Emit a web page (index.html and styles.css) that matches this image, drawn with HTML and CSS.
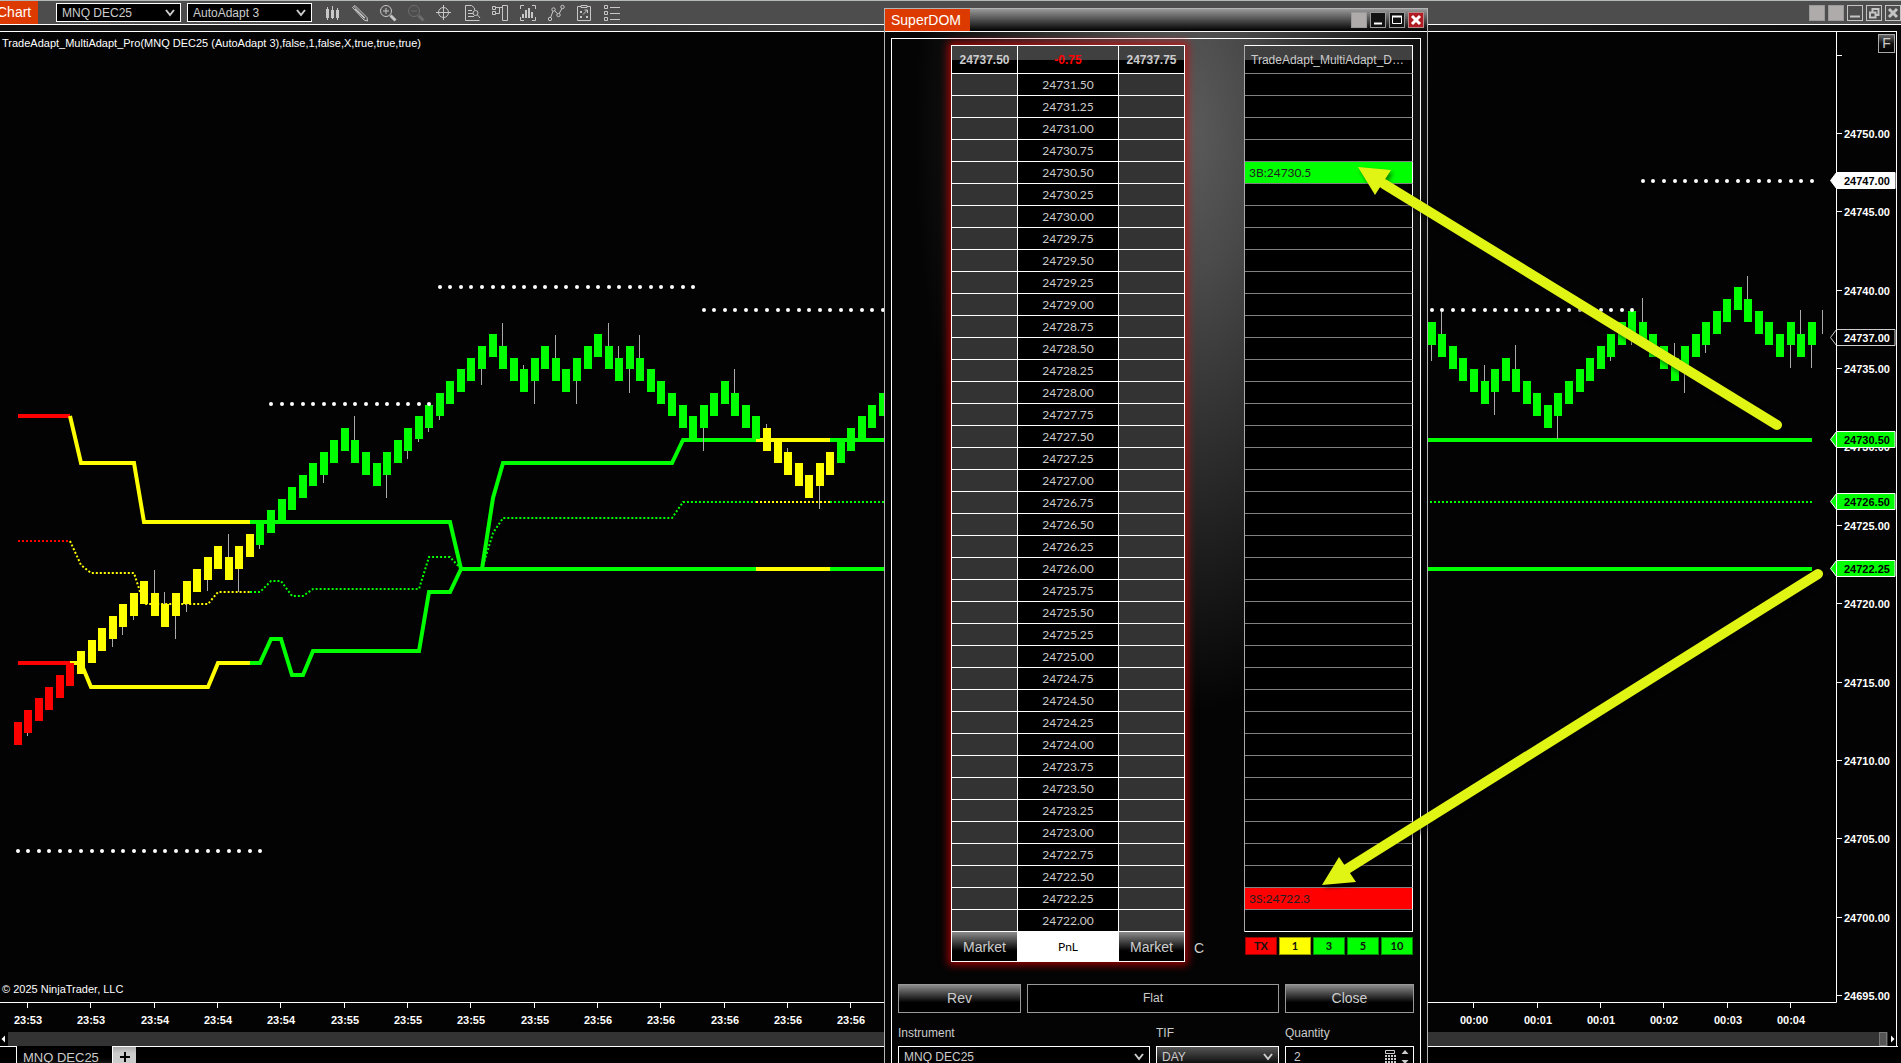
FILE: index.html
```html
<!DOCTYPE html>
<html lang="en">
<head>
<meta charset="utf-8">
<title>Chart - MNQ DEC25</title>
<link rel="stylesheet" href="styles.css">
</head>
<body>
<header class="toolbar">
  <h1 class="toolbar-title">Chart</h1>
  <span class="select toolbar-select">
    <select aria-label="Instrument"><option>MNQ DEC25</option></select>
    <svg class="chevron" viewBox="0 0 10 8"><path d="M1 1l4 5 4-5"/></svg>
  </span>
  <span class="select toolbar-select">
    <select aria-label="Bar type"><option>AutoAdapt 3</option></select>
    <svg class="chevron" viewBox="0 0 10 8"><path d="M1 1l4 5 4-5"/></svg>
  </span>
  <nav class="tools" aria-label="Chart tools">
    <button type="button" aria-label="Chart style"><svg viewBox="0 0 20 20"><path class="solid" d="M4 6h3v9H4zM9 7h3v8H9zM14 7h3v8h-3z"/><path d="M5.500 4v13M10.500 3v13M15.500 5v12"/></svg></button>
    <button type="button" aria-label="Drawing tools"><svg viewBox="0 0 20 20"><path d="M2.500 4.500l2.500-2 12 12 .500 3.500-3.500-1zM5 6l9.500 9.500M4 3.500L15 15"/></svg></button>
    <button type="button" aria-label="Zoom in"><svg viewBox="0 0 20 20"><circle cx="8" cy="8" r="5.500"/><path d="M8 5v6M5 8h6"/><path class="thick" d="M12.500 12.500l5 5"/></svg></button>
    <button type="button" class="dim" aria-label="Zoom out" disabled><svg viewBox="0 0 20 20"><circle cx="8" cy="8" r="5.500"/><path d="M5 8h6"/><path class="thick" d="M12.500 12.500l5 5"/></svg></button>
    <button type="button" aria-label="Crosshair"><svg viewBox="0 0 20 20"><circle cx="9.500" cy="9.500" r="5"/><path d="M9.500 2v15M2 9.500h15"/></svg></button>
    <button type="button" aria-label="Data box"><svg viewBox="0 0 20 20"><path d="M12.500 7V5l-3-2.500h-6v15h14M6 7.500h4M6 10.500h5M6 13.500h6"/><circle cx="13.500" cy="10" r="2.500"/><path d="M15.500 12l2.500 3"/></svg></button>
    <button type="button" aria-label="Chart trader"><svg viewBox="0 0 20 20"><path d="M2.500 3.500h3v3h-3zM2.500 8.500h3v3h-3zM12.500 2.500h5v15h-5zM6 4.500h6M6 10.500h3.500v-6"/></svg></button>
    <button type="button" aria-label="Data series"><svg viewBox="0 0 20 20"><path d="M6 2.500H2.500V6M14 2.500h3.500V6M2.500 14v3.500H6M17.500 14v3.500H14"/><path class="bars" d="M5 11v4M8 7v8M11 5v10M14 9v6"/></svg></button>
    <button type="button" aria-label="Indicators"><svg viewBox="0 0 20 20"><circle cx="4" cy="16" r="1.700"/><circle cx="7.500" cy="6.500" r="1.700"/><circle cx="12.500" cy="12" r="1.700"/><circle cx="16.500" cy="4" r="1.700"/><path d="M4.600 14.500l2.400-6.300M8.600 7.700l2.800 3M13.200 10.500l2.700-5"/></svg></button>
    <button type="button" aria-label="Strategies"><svg viewBox="0 0 20 20"><path d="M7 3.500H3.500v14h13v-14H13M7 2.500h6v2H7zM6 8l2 2M8 8l-2 2M6 13l2 2M8 13l-2 2M12 13l2 2M14 13l-2 2M9 11.500L13.500 7M10.500 7h3v3"/></svg></button>
    <button type="button" aria-label="Properties"><svg viewBox="0 0 20 20"><path d="M2.500 2.500h3v3h-3zM2.500 8.500h3v3h-3zM2.500 14.500h3v3h-3zM8 4.500h10M8 10.500h10M8 16.500h10"/></svg></button>
  </nav>
  <div class="window-controls">
    <button type="button" class="win-btn blank" aria-label="Link instrument"></button>
    <button type="button" class="win-btn blank" aria-label="Link interval"></button>
    <button type="button" class="win-btn outline" aria-label="Minimize"><svg viewBox="0 0 14 14"><path class="bar" d="M2 10.500h10"/></svg></button>
    <button type="button" class="win-btn outline" aria-label="Restore"><svg viewBox="0 0 14 14"><path class="bar" d="M5.500 6V3h6v6h-3M3 6.500h5.500v5H3z"/></svg></button>
    <button type="button" class="win-btn outline" aria-label="Close"><svg viewBox="0 0 14 14"><path class="cross" d="M3 3l8 8M11 3l-8 8"/></svg></button>
  </div>
</header>

<main class="chart-frame">
  <svg class="chart" id="chart" role="img" aria-label="MNQ DEC25 price chart"></svg>
  <button type="button" class="fixed-scale">F</button>
  <div class="scrollbar">
    <button type="button" class="scroll-btn" aria-label="Scroll left"><svg viewBox="0 0 8 14"><path d="M5 3.500v7L1.500 7z"/></svg></button>
    <span class="scroll-thumb"></span>
    <button type="button" class="scroll-btn" aria-label="Scroll right"><svg viewBox="0 0 8 14"><path d="M3 3.500v7L6.500 7z"/></svg></button>
  </div>
</main>

<footer class="tabs">
  <span class="tabs-lead"></span>
  <button type="button" class="tab">MNQ DEC25</button>
  <button type="button" class="tab-add" aria-label="Add tab"><svg viewBox="0 0 12 12"><path d="M6 1v10M1 6h10"/></svg></button>
  <span class="tabs-rest"></span>
</footer>

<section class="dom" aria-label="SuperDOM">
  <header class="dom-header">
    <h2 class="dom-title">SuperDOM</h2>
    <div class="window-controls">
      <button type="button" class="win-btn blank" aria-label="Link"></button>
      <button type="button" class="win-btn dark" aria-label="Minimize"><svg viewBox="0 0 14 14"><path class="bar" d="M3 10.500h8"/></svg></button>
      <button type="button" class="win-btn dark" aria-label="Maximize"><svg viewBox="0 0 14 14"><path d="M2.500 3.500h9v7h-9z"/><path class="bar" d="M2 3.500h10"/></svg></button>
      <button type="button" class="win-btn close" aria-label="Close"><svg viewBox="0 0 14 14"><path class="cross" d="M3 3l8 8M11 3l-8 8"/></svg></button>
    </div>
  </header>
  <div class="dom-body">
    <div class="dom-panel">
      <div class="dom-grid">
        <table class="ladder">
          <colgroup><col class="side"><col><col class="side"></colgroup>
          <thead><tr><th>24737.50</th><th class="change">-0.75</th><th>24737.75</th></tr></thead>
          <tbody id="ladder"></tbody>
          <tfoot><tr><td><button type="button" class="market">Market</button></td><td class="pnl">PnL</td><td><button type="button" class="market">Market</button></td></tr></tfoot>
        </table>
        <button type="button" class="center-btn">C</button>
        <div class="signals-col">
          <table class="signals">
            <thead><tr><th>TradeAdapt_MultiAdapt_DOM</th></tr></thead>
            <tbody id="signals"></tbody>
          </table>
          <div class="chips">
            <button type="button" class="chip red">TX</button>
            <button type="button" class="chip yellow">1</button>
            <button type="button" class="chip">3</button>
            <button type="button" class="chip">5</button>
            <button type="button" class="chip">10</button>
          </div>
        </div>
      </div>
      <div class="actions">
        <button type="button" class="action">Rev</button>
        <output class="position">Flat</output>
        <button type="button" class="action">Close</button>
      </div>
      <div class="fields">
        <label for="instrument">Instrument</label>
        <label for="tif">TIF</label>
        <label for="quantity">Quantity</label>
        <span class="select field">
          <select id="instrument"><option>MNQ DEC25</option></select>
          <svg class="chevron" viewBox="0 0 10 8"><path d="M1 1l4 5 4-5"/></svg>
        </span>
        <span class="select field shaded">
          <select id="tif"><option>DAY</option></select>
          <svg class="chevron" viewBox="0 0 10 8"><path d="M1 1l4 5 4-5"/></svg>
        </span>
        <span class="field quantity">
          <input id="quantity" type="text" inputmode="numeric" value="2">
          <svg class="calc" viewBox="0 0 12 16"><path class="frame" d="M1.500 1.500h9v3h-9z"/><path d="M1 6h2v2H1zM4 6h2v2H4zM7 6h2v2H7zM10 6h2v2h-2zM1 9h2v2H1zM4 9h2v2H4zM7 9h2v2H7zM10 9h2v2h-2zM1 12h2v2H1zM4 12h2v2H4zM7 12h2v2H7zM10 12h2v2h-2z"/></svg>
          <svg class="spin" viewBox="0 0 8 16"><path d="M4 1l3.500 4h-7zM4 15L.500 11h7z"/></svg>
        </span>
      </div>
    </div>
  </div>
</section>

<svg class="annotations" aria-hidden="true">
  <path class="shaft" d="M1777 425L1384 184"/>
  <path class="head" d="M1358 167L1391 170L1375 195Z"/>
  <path class="shaft" d="M1818 574L1347 869"/>
  <path class="head" d="M1322 885L1339 857L1356 882Z"/>
</svg>
<script src="chart.js"></script>
</body>
</html>
```
FILE: styles.css
```css
* {
  box-sizing: border-box;
}

body {
  margin: 0;
  height: 100vh;
  display: flex;
  flex-direction: column;
  position: relative;
  overflow: hidden;
  background: #000;
  color: #ccc;
  font: 12px/16px "Liberation Sans", Arial, sans-serif;
}

button,
select,
input {
  margin: 0;
  padding: 0;
  border: 0;
  border-radius: 0;
  background: none;
  color: inherit;
  font: inherit;
  appearance: none;
}

h1,
h2 {
  margin: 0;
  background: #dc3a00;
  color: #fff;
  font-size: 14px;
  font-weight: 400;
  line-height: 22px;
}

/* Chart window toolbar */
.toolbar {
  flex: none;
  display: flex;
  align-items: center;
  height: 25px;
  border-top: 1px solid #b4b8b8;
  border-bottom: 1px solid #fff;
  background: #4d4d4d;
}

.toolbar-title {
  width: 38px;
  margin-right: 18px;
  line-height: 23px;
  text-indent: -3px;
  white-space: nowrap;
}

.select {
  position: relative;
  display: block;
  border: 1px solid #fff;
  background: #000;
}

.select select {
  display: block;
  width: 100%;
  height: 100%;
  padding: 0 24px 0 5px;
}

.chevron {
  position: absolute;
  top: 50%;
  right: 5px;
  width: 10px;
  height: 8px;
  margin-top: -4px;
  fill: none;
  stroke: #ccc;
  stroke-width: 2;
  pointer-events: none;
}

.toolbar-select {
  width: 125px;
  height: 19px;
  margin-right: 6px;
}

.tools {
  display: flex;
  gap: 8px;
  margin-left: 4px;
}

.tools button,
.tools svg {
  display: block;
  width: 20px;
  height: 20px;
}

.tools svg {
  fill: none;
  stroke: #c8c8c8;
}

.tools .solid {
  fill: #c8c8c8;
  stroke: none;
}

.tools .thick {
  stroke-width: 3;
}

.tools .bars {
  stroke-width: 2;
}

.tools .dim {
  opacity: 0.25;
}

.window-controls {
  display: flex;
  gap: 3px;
  margin-left: auto;
}

.win-btn {
  width: 16px;
  height: 16px;
  border: 1px solid #999;
}

.win-btn svg {
  display: block;
  width: 14px;
  height: 14px;
  fill: none;
  stroke: #fff;
}

.win-btn .bar {
  stroke-width: 2;
}

.win-btn .cross {
  stroke-width: 3;
}

.win-btn.blank {
  background: #b0abab;
}

.win-btn.outline {
  border-color: #c4c4c4;
}

.win-btn.outline svg {
  stroke: #c4c4c4;
}

.win-btn.dark {
  background: #111;
}

.win-btn.close {
  border-color: #b88;
  background: #b01c24;
}

/* Chart */
.chart-frame {
  flex: 1;
  min-height: 0;
  display: flex;
  flex-direction: column;
  position: relative;
  padding: 7px 4px 0 0;
  background: linear-gradient(90deg, #101010, #404040 45%, #303030 60%, #080808);
}

.chart {
  flex: 1;
  min-height: 0;
  width: 100%;
  border-right: 1px solid #fff;
  background: #030303;
  box-shadow: 0 -1px #fff;
}

.chart text {
  fill: #fff;
  font-size: 11px;
  dominant-baseline: central;
}

.chart .tick-label,
.chart .flag-text {
  font-weight: 700;
}

.chart .middle {
  text-anchor: middle;
}

.chart .flag-text {
  fill: #000;
}

.chart .flag-text.light {
  fill: #fff;
}

.chart .axis {
  stroke: #fff;
  fill: none;
}

.chart .wick {
  stroke: #aaa;
}

.chart .band {
  fill: none;
  stroke-width: 4;
}

.chart .mid {
  fill: none;
  stroke-width: 2;
  stroke-dasharray: 2 2;
}

.chart .dot {
  fill: #fff;
}

.fixed-scale {
  position: absolute;
  top: 9px;
  right: 6px;
  width: 17px;
  height: 19px;
  border: 1px solid #aaa;
  background: linear-gradient(#666, #111 50%, #000);
  font-size: 14px;
  line-height: 17px;
}

.scrollbar {
  flex: none;
  display: flex;
  align-items: stretch;
  height: 14px;
  border-right: 1px solid #fff;
  background: #333;
}

.scroll-btn {
  width: 8px;
  background: #000;
}

.scroll-btn svg {
  display: block;
  width: 8px;
  height: 14px;
  fill: #fff;
}

.scroll-thumb {
  width: 8px;
  margin-left: auto;
  margin-right: 1px;
  border: 1px solid #777;
  background: #555;
}

/* Workspace tabs */
.tabs {
  flex: none;
  display: flex;
  height: 17px;
  overflow: hidden;
}

.tabs-lead {
  width: 16px;
  border-top: 1px solid #fff;
}

.tab {
  flex: none;
  width: 97px;
  height: 24px;
  padding-left: 6px;
  border: solid #fff;
  border-width: 0 1px;
  background: linear-gradient(#000 50%, #333);
  color: #ccc;
  font-size: 13px;
  line-height: 24px;
  text-align: left;
}

.tab-add {
  width: 23px;
  border-top: 1px solid #fff;
  background: linear-gradient(#aaa, #ccc 40%);
}

.tab-add svg {
  display: block;
  width: 12px;
  height: 12px;
  margin: 3px auto 0;
  stroke: #000;
  stroke-width: 2;
}

.tabs-rest {
  flex: 1;
  margin-right: 3px;
  border-top: 1px solid #fff;
}

/* SuperDOM window */
.dom {
  position: absolute;
  top: 8px;
  bottom: 0;
  left: 884px;
  width: 544px;
  display: flex;
  flex-direction: column;
  overflow: hidden;
  border: 1px solid #b4b4b4;
  border-bottom: 0;
  background: #030303;
}

.dom-header {
  flex: none;
  display: flex;
  align-items: center;
  height: 23px;
  padding-right: 3px;
  border-bottom: 1px solid #fff;
  background: linear-gradient(#999, #000);
}

.dom-title {
  width: 85px;
  padding-left: 6px;
}

.dom-body {
  flex: 1;
  padding: 6px 6px 0;
  background: radial-gradient(ellipse 270px 580px at 300px 100px, #5c5c5c, #4a4a4a 25%, #040404);
}

.dom-panel {
  height: 100%;
  padding: 6px 6px 0;
  border: 1px solid #fff;
  border-bottom: 0;
}

.dom-grid {
  display: flex;
  align-items: flex-end;
  padding-left: 53px;
}

.ladder,
.signals {
  table-layout: fixed;
  border-collapse: separate;
  border-spacing: 0;
  border: solid #fff;
  border-width: 1px 0 0 1px;
}

.ladder {
  flex: none;
  width: 234px;
  box-shadow: 0 0 8px 3px rgba(220, 0, 0, 0.7);
}

.ladder .side {
  width: 66px;
}

.ladder th,
.ladder td,
.signals th,
.signals td {
  height: 22px;
  padding: 0;
  border: solid #fff;
  border-width: 0 1px 1px 0;
  background: #000;
  overflow: hidden;
  text-align: center;
  white-space: nowrap;
}

.ladder thead th,
.signals thead th {
  height: 28px;
  background: linear-gradient(#404040 50%, #000 50%);
}

.ladder .change {
  color: #f00;
}

.ladder tbody td {
  font: 12px/20px Lato, "Open Sans", sans-serif;
}

.ladder tbody td:nth-child(odd) {
  background: #333;
}

.ladder tfoot td {
  height: 30px;
}

.ladder .pnl {
  background: #fff;
  color: #000;
  font: 12px/16px Lato, "Open Sans", sans-serif;
}

.market {
  display: block;
  width: 100%;
  height: 29px;
  background: linear-gradient(#8c8c8c, #000 65%);
  font-size: 14px;
}

.center-btn {
  margin-left: 9px;
  height: 29px;
  font-size: 14px;
}

.signals-col {
  width: 169px;
  margin-left: auto;
  margin-right: 1px;
}

.signals {
  width: 100%;
  border-left-color: #aaa;
}

.signals thead th {
  padding: 0 6px;
  font-weight: 400;
  text-overflow: ellipsis;
}

.signals th,
.signals td {
  border-bottom-color: #808080;
}

.signals tbody td {
  padding-left: 4px;
  color: #202020;
  font: 12px/20px Lato, "Open Sans", sans-serif;
  text-align: left;
}

.signals tbody tr:last-child td {
  border-bottom-color: #fff;
}

.signals .buy {
  background: #0f0;
}

.signals .sell {
  background: #f00;
}

.chips {
  display: flex;
  gap: 2px;
  margin: 5px 0 7px 1px;
}

.chip {
  flex: 1;
  height: 18px;
  border: 1px solid #088c08;
  background: #0f0;
  color: #111;
  font: bold 11px/16px Lato, "Open Sans", sans-serif;
}

.chip.red {
  border-color: #900;
  background: #f00;
}

.chip.yellow {
  border-color: #990;
  background: #ff0;
}

.actions {
  display: grid;
  grid-template-columns: minmax(0, 123fr) minmax(0, 252fr) minmax(0, 129fr);
  gap: 6px;
  margin-top: 22px;
}

.action,
.position {
  height: 29px;
  border: 1px solid #999;
  background: #000;
  line-height: 27px;
  text-align: center;
}

.action {
  background: linear-gradient(#8c8c8c, #000 65%);
  font-size: 14px;
}

.fields {
  display: grid;
  grid-template-columns: minmax(0, 252fr) minmax(0, 123fr) minmax(0, 129fr);
  gap: 5px 6px;
  margin-top: 12px;
}

.field {
  height: 22px;
  border: 1px solid #fff;
  background: #000;
}

.field.shaded {
  background: linear-gradient(#555, #000);
}

.quantity {
  display: flex;
  align-items: center;
  gap: 5px;
  padding: 0 4px 0 8px;
}

.quantity input {
  flex: 1;
  min-width: 0;
}

.quantity svg {
  flex: none;
  fill: #ccc;
}

.calc {
  width: 12px;
  height: 16px;
}

.quantity .calc .frame {
  fill: none;
  stroke: #ccc;
}

.spin {
  width: 8px;
  height: 16px;
}

/* Arrows drawn over both windows */
.annotations {
  position: absolute;
  top: 0;
  left: 0;
  width: 100%;
  height: 100%;
  pointer-events: none;
  filter: drop-shadow(2px 3px 2px rgba(0, 0, 0, 0.5));
}

.annotations .shaft {
  stroke: #e0f514;
  stroke-width: 10;
  stroke-linecap: round;
}

.annotations .head {
  fill: #e0f514;
}
```
FILE: chart.js
```js
const COLORS = { r: '#ff0000', y: '#ffff00', g: '#00ff00' };

// Candles as "level" with optional wicks: u = upper, d = lower, in pixels.
const LEFT = '0 1d3 2 3 4 5 6 7 8 9d8 10d8 11d4 12 11u23 10u12 11d23 12d8 13 14d11 15 14u23 15d23 16 17d4 18 19 20 21 22 23d8 24 25 24u24 23 22 23d23 24 25d8 26d3 27d4 28d4 29 30 31 32d16 33 32u23 31 30u4 31d23 32 31u23 30 31d23 32 33 32u23 31u12 32d24 31u23 30 29 28 27 26 27d23 28 29 28u24 27 26 25u4 24 23u4 22 21 22d23 23 24 25 26 27 28';
const RIGHT = '34d16 33u23 32 31 30 29u16 30d23 31 30u24 29 28 27 28d23 29 30 31 32 33d4 34 35d11 34u24 33 32 31u15 32d24 33 34d8 35 36 37 36u23 35 34 33 34d23 33u24 34d23';

const BANDS = [
  ['r', '18,416 70,416'],
  ['y', '70,416 81,463 134,463 144,522 250,522'],
  ['g', '250,522 450,522 461,569 756,569'],
  ['y', '756,569 830,569'],
  ['g', '830,569 1812,569'],
  ['g', '482,569 493,498 503,463 672,463 683,440 756,440'],
  ['y', '756,440 830,440'],
  ['g', '830,440 1812,440'],
  ['r', '18,663 70,663'],
  ['y', '70,663 81,663 91,687 208,687 218,663 250,663'],
  ['g', '250,663 260,663 271,639 281,639 292,675 303,675 313,651 419,651 429,592 450,592 461,569']
];

const MIDS = [
  ['r', '18,541 70,541'],
  ['y', '70,541 81,565 91,573 134,573 144,604 208,604 218,592 250,592'],
  ['g', '250,592 260,592 271,581 281,581 292,596 303,596 313,589 419,589 429,557 450,557 461,569'],
  ['g', '482,569 493,533 503,518 672,518 683,502 756,502'],
  ['y', '756,502 830,502'],
  ['g', '830,502 1812,502']
];

// Runs of dots: first bar, last bar, y
const DOTS = [[0, 23, 851], [24, 39, 404], [40, 64, 287], [65, 153, 310], [154, 170, 181]];

const TIMES = [
  [27, '23:53'], [90, '23:53'], [154, '23:54'], [217, '23:54'], [280, '23:54'], [344, '23:55'],
  [407, '23:55'], [470, '23:55'], [534, '23:55'], [597, '23:56'], [660, '23:56'], [724, '23:56'],
  [787, '23:56'], [850, '23:56'], [1473, '00:00'], [1537, '00:01'], [1600, '00:01'],
  [1663, '00:02'], [1727, '00:03'], [1790, '00:04']
];

const FLAGS = [
  [24747, '#fff', '#fff', ''], [24737, '#000', '#ccc', 'light'], [24730.5, '#0f0', '#fff', ''],
  [24726.5, '#0f0', '#fff', ''], [24722.25, '#0f0', '#fff', '']
];

const barX = i => Math.floor(18.2 + 10.553 * i);
const priceY = p => Math.round(133 + (24750 - p) * 15.673);

function candles(list, first) {
  return list.split(' ').map((item, k) => {
    const [, level, up, down] = item.match(/^(\d+)(?:u(\d+))?(?:d(\d+))?$/);
    const i = first + k;
    const x = barX(i);
    const top = Math.round(722 - 11.755 * level);
    const color = i < 6 ? 'r' : i < 23 || (i > 70 && i < 78) ? 'y' : 'g';
    return `<path class="wick" d="M${x - 0.5} ${top - (up || 0)}V${top + 23 + Number(down || 0)}"/>` +
      `<rect x="${x - 4}" y="${top}" width="8" height="23" fill="${COLORS[color]}"/>`;
  }).join('');
}

function drawChart() {
  const svg = document.getElementById('chart');
  const w = svg.clientWidth;
  const h = svg.clientHeight;
  const ax = w - 60;
  const ay = h - 30;
  let plot = '';
  MIDS.forEach(([c, pts]) => { plot += `<polyline class="mid" stroke="${COLORS[c]}" points="${pts}"/>`; });
  BANDS.forEach(([c, pts]) => { plot += `<polyline class="band" stroke="${COLORS[c]}" points="${pts}"/>`; });
  plot += candles(LEFT, 0) + candles(RIGHT, 134);
  plot += '<path class="wick" d="M1822.5 310V334"/>';
  DOTS.forEach(([a, b, y]) => {
    for (let i = a; i <= b; i++) plot += `<circle class="dot" cx="${barX(i)}" cy="${y}" r="2"/>`;
  });

  let axis = `<path class="axis" d="M${ax + 0.5} 0V${ay + 0.5}H0"/>`;
  TIMES.forEach(([x, label]) => {
    axis += `<path class="axis" d="M${x + 0.5} ${ay}v6"/><text class="tick-label middle" x="${x + 1}" y="${ay + 18}">${label}</text>`;
  });
  let prices = '';
  for (let p = 24755; p >= 24695; p -= 5) {
    const y = priceY(p);
    prices += `<path class="axis" d="M${ax} ${y + 0.5}h6"/>`;
    if (p < 24755) prices += `<text class="tick-label" x="${ax + 8}" y="${y + 1}">${p.toFixed(2)}</text>`;
  }
  FLAGS.forEach(([p, fill, stroke, tone]) => {
    const y = priceY(p) + 0.5;
    prices += `<path fill="${fill}" stroke="${stroke}" d="M${ax - 5.5} ${y}l6-8h58.500v16h-58.500z"/>` +
      `<text class="flag-text ${tone}" x="${ax + 8}" y="${y + 0.5}">${p.toFixed(2)}</text>`;
  });

  svg.innerHTML = `<g transform="translate(0 -32)">${plot}${prices}</g>${axis}` +
    '<text x="2" y="11">TradeAdapt_MultiAdapt_Pro(MNQ DEC25 (AutoAdapt 3),false,1,false,X,true,true,true)</text>' +
    `<text x="2" y="${ay - 13}">© 2025 NinjaTrader, LLC</text>`;
}

function fillTables() {
  const signals = { 24730.5: ['buy', '3B:24730.5'], 24722.25: ['sell', '3S:24722.3'] };
  let ladder = '';
  let rows = '';
  for (let p = 24731.5; p >= 24722; p -= 0.25) {
    const [cls, text] = signals[p] || ['', ''];
    ladder += `<tr><td></td><td>${p.toFixed(2)}</td><td></td></tr>`;
    rows += `<tr><td class="${cls}">${text}</td></tr>`;
  }
  document.getElementById('ladder').innerHTML = ladder;
  document.getElementById('signals').innerHTML = rows;
}

fillTables();
drawChart();
window.addEventListener('resize', drawChart);
```
